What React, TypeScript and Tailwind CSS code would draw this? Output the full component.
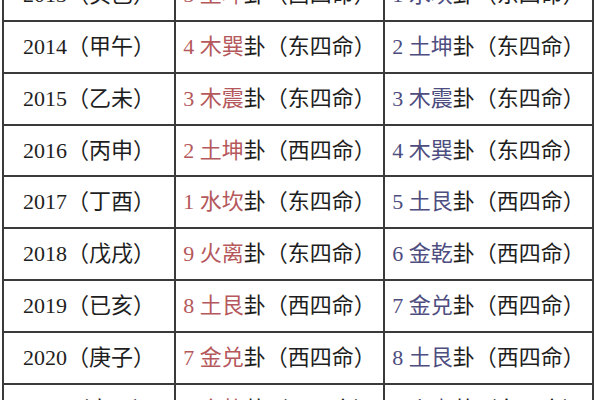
import React from "react";

type Row = { y: string; m: [string, string]; f: [string, string]; h: string };

const rows: Row[] = [
  { y: "2013（癸巳）", m: ["5 土坤", "卦（西四命）"], f: ["1 水坎", "卦（东四命）"], h: "h-[52px]" },
  { y: "2014（甲午）", m: ["4 木巽", "卦（东四命）"], f: ["2 土坤", "卦（东四命）"], h: "h-[52px]" },
  { y: "2015（乙未）", m: ["3 木震", "卦（东四命）"], f: ["3 木震", "卦（东四命）"], h: "h-[52px]" },
  { y: "2016（丙申）", m: ["2 土坤", "卦（西四命）"], f: ["4 木巽", "卦（东四命）"], h: "h-[51px]" },
  { y: "2017（丁酉）", m: ["1 水坎", "卦（东四命）"], f: ["5 土艮", "卦（西四命）"], h: "h-[52px]" },
  { y: "2018（戊戌）", m: ["9 火离", "卦（东四命）"], f: ["6 金乾", "卦（西四命）"], h: "h-[52px]" },
  { y: "2019（已亥）", m: ["8 土艮", "卦（西四命）"], f: ["7 金兑", "卦（西四命）"], h: "h-[52px]" },
  { y: "2020（庚子）", m: ["7 金兑", "卦（西四命）"], f: ["8 土艮", "卦（西四命）"], h: "h-[52px]" },
  { y: "2021（辛丑）", m: ["6 金乾", "卦（西四命）"], f: ["9 火离", "卦（东四命）"], h: "h-[52px]" },
];

export default function App() {
  return (
    <div
      className="w-[600px] h-[400px] overflow-hidden bg-white text-[22px] leading-none text-[#1e1e1e]"
      style={{ fontFamily: '"Liberation Serif", "Noto Sans CJK SC", serif' }}
    >
      <div className="-mt-[30px] ml-[2px] w-[592px] border-l-2 border-[#3a3a3a]">
        {rows.map((r) => (
          <div key={r.y} className={`flex border-b-2 border-[#3a3a3a] ${r.h}`}>
            <div className="w-[172px] border-r-2 border-[#3a3a3a] flex items-center justify-center whitespace-nowrap">
              {r.y}
            </div>
            <div className="w-[209px] border-r-2 border-[#3a3a3a] flex items-center justify-center whitespace-pre">
              <span className="text-[#b5585c]">{r.m[0]}</span>
              <span>{r.m[1]}</span>
            </div>
            <div className="w-[209px] border-r-2 border-[#3a3a3a] flex items-center justify-center whitespace-pre">
              <span className="text-[#4d4d80]">{r.f[0]}</span>
              <span>{r.f[1]}</span>
            </div>
          </div>
        ))}
      </div>
    </div>
  );
}
